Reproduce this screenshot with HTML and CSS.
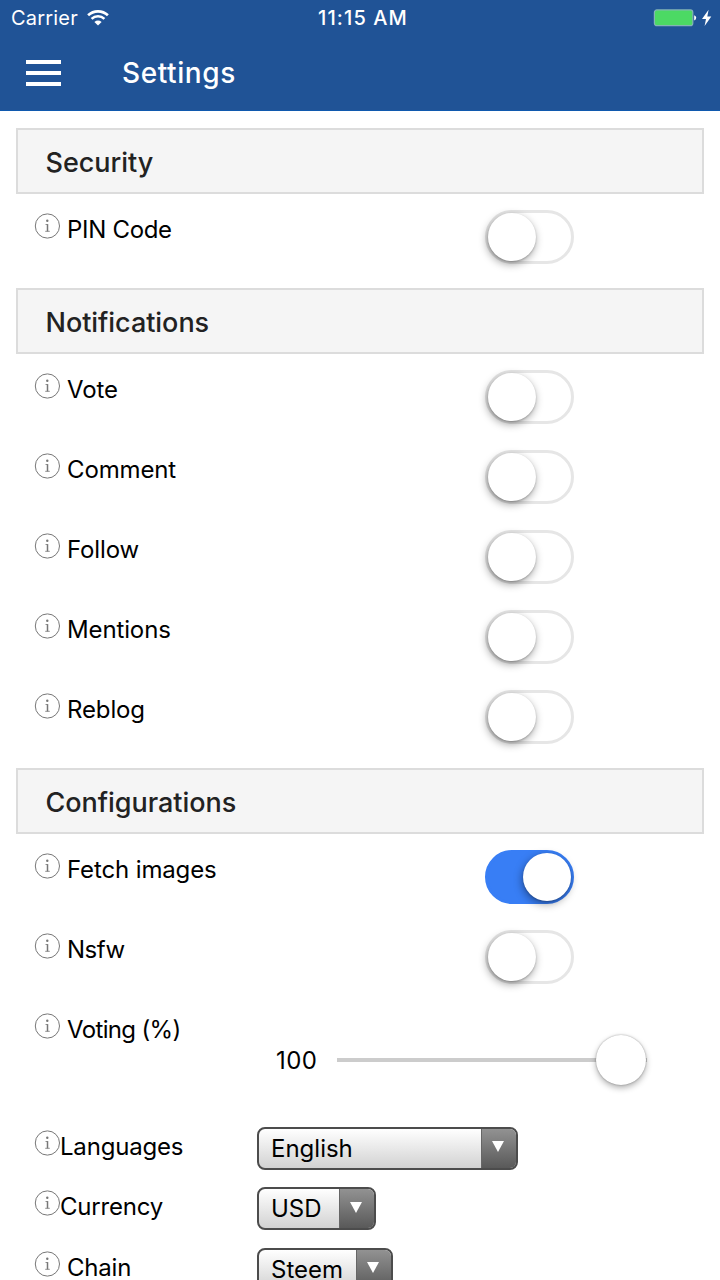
FILE: index.html
```html
<!DOCTYPE html>
<html lang="en">
<head>
<meta charset="utf-8">
<title>Settings</title>
<link rel="stylesheet" href="styles.css">
</head>
<body>
<svg class="defs" width="0" height="0" aria-hidden="true">
  <symbol id="info" viewBox="0 0 26 26">
    <circle cx="13.4" cy="13" r="12.1" fill="none" stroke="#777" stroke-width="1"/>
    <circle cx="13.3" cy="7.7" r="1.2" fill="#777"/>
    <path d="M11.5 11.5h1.9M11.2 18.3h4.6" fill="none" stroke="#888" stroke-width=".9"/>
    <path d="M13.5 11.1v7.3" stroke="#777" stroke-width="1.5"/>
  </symbol>
</svg>
<header class="header">
  <div class="status">
    <div class="carrier"><span class="carrier-name">Carrier</span>
      <svg class="wifi" width="22" height="17" viewBox="0 0 22 17">
        <path d="M1.1 6.2A14.5 14.5 0 0 1 20.9 6.2" fill="none" stroke="#fff" stroke-width="2.7"/>
        <path d="M4.6 9.9A9.2 9.2 0 0 1 17.4 9.9" fill="none" stroke="#fff" stroke-width="2.6"/>
        <path d="M7.4 12.9Q11 10 14.6 12.9L11 16.6Z" fill="#fff"/>
      </svg>
    </div>
    <span class="clock">11:15 AM</span>
    <svg class="battery" width="60" height="20" viewBox="0 0 60 20">
      <rect x="1.4" y="1.9" width="38.4" height="15.8" rx="2.5" fill="#4cd964" stroke="#83b5b5" stroke-width="1.2"/>
      <path d="M41.2 7.2q2 .6 2 2.6t-2 2.6z" fill="#fff"/>
      <path d="M55.6 1.7L49 11h4l-1.4 7 6.7-9.5h-4z" fill="#fff"/>
    </svg>
  </div>
  <div class="navbar">
    <div class="menu"><i></i><i></i><i></i></div>
    <h1 class="title">Settings</h1>
  </div>
</header>
<main class="content">
  <section class="group">
    <h2 class="heading">Security</h2>
    <div class="row"><svg class="info"><use href="#info"/></svg><span class="label pin">PIN Code</span><span class="toggle"></span></div>
  </section>
  <section class="group">
    <h2 class="heading">Notifications</h2>
    <div class="row"><svg class="info"><use href="#info"/></svg><span class="label">Vote</span><span class="toggle"></span></div>
    <div class="row"><svg class="info"><use href="#info"/></svg><span class="label">Comment</span><span class="toggle"></span></div>
    <div class="row"><svg class="info"><use href="#info"/></svg><span class="label">Follow</span><span class="toggle"></span></div>
    <div class="row"><svg class="info"><use href="#info"/></svg><span class="label">Mentions</span><span class="toggle"></span></div>
    <div class="row"><svg class="info"><use href="#info"/></svg><span class="label">Reblog</span><span class="toggle"></span></div>
  </section>
  <section class="group">
    <h2 class="heading">Configurations</h2>
    <div class="row"><svg class="info"><use href="#info"/></svg><span class="label">Fetch images</span><span class="toggle on"></span></div>
    <div class="row"><svg class="info"><use href="#info"/></svg><span class="label nsfw">Nsfw</span><span class="toggle"></span></div>
    <div class="row voting"><svg class="info"><use href="#info"/></svg><span class="label">Voting (%)</span>
      <div class="range"><span class="value">100</span><span class="track"><span class="thumb"></span></span></div>
    </div>
    <div class="choice"><svg class="info"><use href="#info"/></svg><span class="label">Languages</span><div class="select language"><span class="option">English</span><span class="arrow"></span></div></div>
    <div class="choice"><svg class="info"><use href="#info"/></svg><span class="label">Currency</span><div class="select currency"><span class="option">USD</span><span class="arrow"></span></div></div>
    <div class="choice"><svg class="info"><use href="#info"/></svg><span class="label spaced">Chain</span><div class="select chain"><span class="option">Steem</span><span class="arrow"></span></div></div>
  </section>
</main>
</body>
</html>
```
FILE: styles.css
```css
* { box-sizing: border-box; }
body { margin: 0; width: 720px; height: 1280px; overflow: hidden; background: #fff; color: #000; font-family: Inter, "Liberation Sans", sans-serif; font-size: 24px; }
.defs { position: absolute; }
.header { height: 111px; background: #205396; border-bottom: 1px solid #1059ae; color: #fff; }
.status { display: grid; grid-template-columns: 1fr auto 1fr; height: 36px; align-items: center; padding: 0 7px 0 11px; }
.carrier { display: flex; align-items: center; gap: 9px; font-size: 20px; line-height: 37px; letter-spacing: .2px; }
.wifi { margin-top: -3px; }
.clock { padding-left: 2px; font-size: 20px; font-weight: 500; line-height: 37px; letter-spacing: 1.1px; }
.battery { justify-self: end; margin-top: -1px; }
.navbar { display: flex; align-items: center; height: 74px; padding-left: 26px; gap: 61px; }
.menu { display: flex; flex-direction: column; gap: 7px; width: 35px; }
.menu i { height: 3.7px; background: #fff; }
.title { margin: 0; font-size: 28px; font-weight: 500; line-height: 76px; letter-spacing: .6px; }
.content { padding: 17px 16px 0; }
.group { padding-bottom: 14px; }
.heading { height: 66px; margin: 0; padding-left: 27.5px; border: 2px solid #dcdcdc; background: #f5f5f5; color: #222; font-size: 27px; font-weight: 500; line-height: 66px; letter-spacing: -.04px; }
.row { display: flex; height: 80px; padding: 16px 0 0 18px; }
.info { width: 26px; height: 26px; margin-top: 3px; flex: none; }
.label { letter-spacing: -.13px; }
.row .label { width: 402px; margin-left: 7px; padding-top: 5px; line-height: 30px; }
.row .pin { letter-spacing: -.3px; }
.row .nsfw { letter-spacing: -.5px; }
.row .label + .toggle { margin-left: 16px; }
.toggle { display: block; flex: none; width: 89px; height: 54px; padding: 0; border: 3px solid #e6e6e6; border-radius: 27px; background: #fff; }
.toggle::before { content: ""; display: block; width: 48px; height: 48px; border-radius: 50%; background: #fff; box-shadow: -1px 3px 8px rgba(0,0,0,.38), 0 1px 2px rgba(0,0,0,.2); }
.toggle.on { background: #387ef5; border-color: #387ef5; }
.toggle.on::before { margin-left: 35px; }
.row.voting { height: 132.6px; }
.voting .label { width: 209px; letter-spacing: -.65px; }
.range { display: flex; align-items: center; height: 100px; width: 372px; gap: 20px; }
.value { width: 41px; letter-spacing: .4px; }
.track { display: flex; justify-content: flex-end; align-items: center; width: 310px; height: 4px; background: #ccc; }
.thumb { width: 50px; height: 50px; margin-right: 1px; border-radius: 50%; background: #fff; box-shadow: 0 3px 6px rgba(0,0,0,.3), 0 0 2px rgba(0,0,0,.35); }
.choice { display: flex; height: 43px; margin-bottom: 17.7px; padding-left: 18px; }
.choice .label { width: 197px; line-height: 39px; letter-spacing: -.2px; }
.choice .spaced { padding-left: 7px; }
.select { display: flex; height: 43px; border: 2px solid #4c4c4c; border-radius: 8px; background: linear-gradient(#fff, #d2d2d2); overflow: hidden; }
.option { flex: 1; padding-left: 12px; line-height: 40px; }
.arrow { display: flex; justify-content: center; align-items: center; width: 35px; padding: 0 2px 3px 0; border-left: 1px solid #666; background: linear-gradient(#929292, #595959); }
.arrow::before { content: ""; border: 6px solid transparent; border-top: 11px solid #fff; border-bottom: 0; }
.language { width: 261px; }
.currency { width: 119px; }
.chain { width: 136px; }
```
